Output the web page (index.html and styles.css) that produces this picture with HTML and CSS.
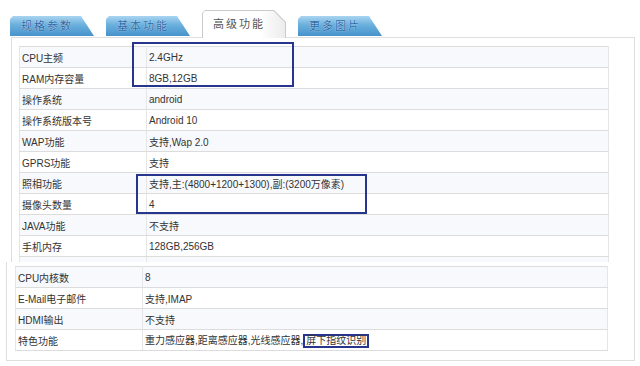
FILE: index.html
```html
<!DOCTYPE html>
<html>
<head>
  <meta charset="utf-8">
  <title>高级功能</title>
  <link rel="stylesheet" href="styles.css">
</head>
<body>
  <div class="shot shot-top">
    <div class="tabs">
      <div class="tab">规格参数</div>
      <div class="tab">基本功能</div>
      <div class="tab tab-active"><span class="tab-face">高级功能</span></div>
      <div class="tab">更多图片</div>
    </div>
    <div class="panel">
      <table class="spec">
        <tr><td class="key">CPU主频</td><td>2.4GHz</td></tr>
        <tr><td class="key">RAM内存容量</td><td>8GB,12GB</td></tr>
        <tr><td class="key">操作系统</td><td>android</td></tr>
        <tr><td class="key">操作系统版本号</td><td>Android 10</td></tr>
        <tr><td class="key">WAP功能</td><td>支持,Wap 2.0</td></tr>
        <tr><td class="key">GPRS功能</td><td>支持</td></tr>
        <tr><td class="key">照相功能</td><td>支持,主:(4800+1200+1300),副:(3200万像素)</td></tr>
        <tr><td class="key">摄像头数量</td><td>4</td></tr>
        <tr><td class="key">JAVA功能</td><td>不支持</td></tr>
        <tr><td class="key">手机内存</td><td>128GB,256GB</td></tr>
        <tr><td class="key">&nbsp;</td><td>&nbsp;</td></tr>
      </table>
    </div>
    <!-- рамки-выделения поверх таблицы -->
    <div class="mark mark-cpu"></div>
    <div class="mark mark-camera"></div>
  </div>

  <div class="shot shot-bottom">
    <table class="spec spec-wide">
      <tr><td class="key">CPU内核数</td><td>8</td></tr>
      <tr><td class="key">E-Mail电子邮件</td><td>支持,IMAP</td></tr>
      <tr><td class="key">HDMI输出</td><td>不支持</td></tr>
      <tr><td class="key">特色功能</td><td>重力感应器,距离感应器,光线感应器,<span class="mark-inline">屏下指纹识别</span></td></tr>
    </table>
  </div>
</body>
</html>
```

FILE: styles.css
```css
body {
  margin: 0;
  background-color: #fff;
  font-family: "Liberation Sans", "Noto Sans CJK SC", sans-serif;
  color: #333;
  width: 640px;
}

.shot-top {
  position: relative;
  height: 262px;
  overflow: hidden;
}

/* Вкладки */
.tabs {
  display: flex;
  align-items: flex-end;
  gap: 12px;
  height: 37px;
  padding-left: 10px;
}

.tab {
  width: 84px;
  height: 20px;
  margin-bottom: 1px;
  box-sizing: border-box;
  padding-left: 11px;
  font-size: 11px;
  line-height: 21px;
  letter-spacing: 2px;
  color: #2a68a6;
  text-shadow: 0 0 1px #eaf5fd;
  background: linear-gradient(#a9d5f0, #6aafdd 45%, #4893cc);
  clip-path: polygon(0 3px, 3px 0, calc(100% - 13px) 0, 100% 100%, 0 100%);
}

.tab-active {
  position: relative;
  z-index: 1;
  height: 28px;
  margin-bottom: -1px;
  padding: 1px 1px 0 1px;
  background: #cacaca;
  text-shadow: none;
  clip-path: polygon(0 3px, 3px 0, calc(100% - 12px) 0, 100% 12px, 100% 100%, 0 100%);
}

.tab-active .tab-face {
  display: block;
  height: 100%;
  padding-left: 10px;
  line-height: 26px;
  color: #555;
  background: linear-gradient(to right, #fff 70%, #ececec);
  clip-path: polygon(0 2px, 2px 0, calc(100% - 11.6px) 0, 100% 11.6px, 100% 100%, 0 100%);
}

/* Панель с таблицей */
.panel {
  margin-left: 11px;
  width: 624px;
  box-sizing: border-box;
  border: 1px solid #dedede;
  padding: 8px 25px 0 7px;
}

.spec {
  border-collapse: collapse;
  width: 590px;
  font-size: 10px;
  color: #333;
}

.spec td {
  height: 20px;
  padding: 0 0 0 2px;
  border: 1px solid #dcdcdc;
  border-left-color: #e6e6e6;
  border-right-color: #e6e6e6;
  white-space: nowrap;
}

.spec td.key {
  width: 124px;
}

.spec tr:nth-child(odd) td {
  background-color: #f7f9fc;
}

.shot-bottom {
  margin-left: 6px;
  width: 629px;
  box-sizing: border-box;
  border: 1px solid #dedede;
  border-top: none;
  padding: 4px 26px 9px 8px;
}

.spec-wide {
  width: 593px;
}

/* Синие рамки */
.mark {
  position: absolute;
  box-sizing: border-box;
  border: 2px solid #28358c;
}

.mark-cpu {
  left: 132px;
  top: 42px;
  width: 162px;
  height: 45px;
}

.mark-camera {
  left: 136px;
  top: 174px;
  width: 231px;
  height: 40px;
}

.mark-inline {
  display: inline-block;
  line-height: 10px;
  padding: 0 1px;
  border: 2px solid #28358c;
}
```
